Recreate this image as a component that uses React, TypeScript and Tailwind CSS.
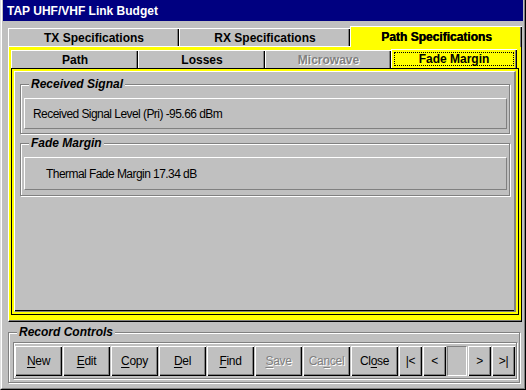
import React from "react";

const FONT = "font-['Liberation_Sans',Arial,sans-serif]";

function TopTab({ label }: { label: string }) {
  return (
    <div className="w-[171px] h-[19px] bg-[#c0c0c0] border-t border-l border-b border-white shadow-[inset_-1px_0_0_#000,inset_-2px_0_0_#808080] flex items-center justify-center font-bold text-[12px] leading-none">
      {label}
    </div>
  );
}

function SubTab({ label, w, disabled }: { label: string; w: string; disabled?: boolean }) {
  return (
    <div
      className={`${w} h-[18px] bg-[#c0c0c0] border-t border-l border-white shadow-[inset_-1px_0_0_#000,inset_-2px_0_0_#808080] flex items-center justify-center font-bold text-[12px] leading-none ${
        disabled ? "text-[#808080] [text-shadow:1px_1px_0_#fff]" : ""
      }`}
    >
      {label}
    </div>
  );
}

function Btn({
  pre,
  u,
  post,
  disabled,
  w = "w-[47px]",
}: {
  pre?: string;
  u?: string;
  post?: string;
  disabled?: boolean;
  w?: string;
}) {
  return (
    <div
      className={`${w} h-[30px] bg-[#c0c0c0] shadow-[inset_1px_1px_0_#fff,inset_-1px_-1px_0_#000,inset_-2px_-2px_0_#808080] flex items-center justify-center text-[12px] leading-none tracking-[-0.3px] ${
        disabled ? "text-[#808080] [text-shadow:1px_1px_0_#fff]" : "text-black"
      }`}
    >
      <span>
        {pre}
        {u && <span className="underline underline-offset-[2px]">{u}</span>}
        {post}
      </span>
    </div>
  );
}

function GroupBox({
  title,
  className,
  children,
}: {
  title: string;
  className?: string;
  children: React.ReactNode;
}) {
  return (
    <div
      className={`relative border border-[#808080] shadow-[inset_1px_1px_0_#fff,1px_1px_0_#fff] ${className ?? ""}`}
    >
      <span className="absolute left-[8px] top-[-8px] px-[2px] bg-[#c0c0c0] font-bold italic text-[12px] leading-[14px]">
        {title}
      </span>
      {children}
    </div>
  );
}

export default function App() {
  return (
    <div
      className={`w-[526px] h-[390px] bg-[#c0c0c0] text-black ${FONT} border-l border-l-[#dfdfdf] border-r border-r-black border-b border-b-black overflow-hidden`}
    >
      <div className="h-full border-l border-l-white border-r border-r-[#808080] border-b border-b-[#808080] px-[1px] pb-[1px] flex flex-col">
        {/* Title bar */}
        <div className="h-[21px] shrink-0 bg-[#000080] text-white font-bold text-[12px] leading-none flex items-center pl-[4px]">
          TAP UHF/VHF Link Budget
        </div>

        {/* Client */}
        <div className="flex flex-col pl-[5px] pr-[1px] pt-[5px]">
          {/* Top tabs */}
          <div className="flex items-end h-[21px]">
            <TopTab label="TX Specifications" />
            <TopTab label="RX Specifications" />
            <div className="flex-1 h-[21px] bg-[#ffff00] border-t border-l border-white shadow-[inset_-1px_0_0_#000,inset_-2px_0_0_#808080] flex items-center justify-center font-bold text-[12px] leading-none [text-shadow:0.4px_0_0_#000]">
              Path Specifications
            </div>
          </div>

          {/* Page 1 */}
          <div className="h-[275px] bg-[#ffff00] border-l border-l-white border-r border-r-black border-b border-b-black shadow-[inset_0_-1px_0_#808080] pl-[2px] pr-[2px] pt-[2px] pb-[6px] flex flex-col">
            {/* Sub tabs */}
            <div className="flex items-end h-[19px] shrink-0">
              <SubTab label="Path" w="w-[127px]" />
              <SubTab label="Losses" w="w-[127px]" />
              <SubTab label="Microwave" w="w-[126px]" disabled />
              <div className="w-[126px] h-[19px] bg-[#ffff00] border-t border-l border-white shadow-[inset_-1px_0_0_#000,inset_-2px_0_0_#808080] p-[2px] pr-[3px]">
                <div className="h-full border border-dotted border-black flex items-center justify-center font-bold text-[12px] leading-none">
                  Fade Margin
                </div>
              </div>
            </div>

            {/* Page 2 */}
            <div className="flex-1 border border-black bg-[#ffff00] p-[2px] flex">
              <div className="flex-1 bg-[#c0c0c0] border-t border-l border-white border-r-2 border-b border-r-[#808080] border-b-[#808080] shadow-[inset_0_-1px_0_#000] pt-[12px] pl-[5px] pr-[4px] flex flex-col">
                <GroupBox title="Received Signal" className="pt-[13px] pl-[3px] pr-[2px] pb-[4px]">
                  <div className="h-[31px] border-t border-l border-white border-r border-b border-r-[#808080] border-b-[#808080] flex items-center pl-[8px] text-[12px] tracking-[-0.55px]">
                    Received Signal Level (Pri) -95.66 dBm
                  </div>
                </GroupBox>
                <GroupBox title="Fade Margin" className="mt-[9px] pt-[13px] pl-[3px] pr-[2px] pb-[5px]">
                  <div className="h-[33px] border-t border-l border-white border-r border-b border-r-[#808080] border-b-[#808080] flex items-center pl-[21px] text-[12px] tracking-[-0.55px]">
                    Thermal Fade Margin 17.34 dB
                  </div>
                </GroupBox>
              </div>
            </div>
          </div>

          {/* Record Controls */}
          <GroupBox title="Record Controls" className="mt-[10px] w-[512px] pt-[9px] pl-[4px] pr-[2px] pb-[3px]">
            <div className="border border-[#808080] shadow-[inset_1px_1px_0_#fff,1px_1px_0_#fff] pt-[3px] pb-[2px] pl-[1px] flex gap-[1px]">
              <Btn u="N" post="ew" />
              <Btn u="E" post="dit" />
              <Btn u="C" post="opy" />
              <Btn u="D" post="el" />
              <Btn u="F" post="ind" />
              <Btn u="S" post="ave" disabled />
              <Btn pre="Ca" u="n" post="cel" disabled />
              <Btn pre="Cl" u="o" post="se" />
              <Btn pre="|<" w="w-[23px]" />
              <Btn pre="<" w="w-[23px]" />
              <div className="w-[20px] h-[30px] border-t border-l border-[#808080] border-r border-b border-r-white border-b-white" />
              <Btn pre=">" w="w-[23px]" />
              <Btn pre=">|" w="w-[23px]" />
            </div>
          </GroupBox>
        </div>
      </div>
    </div>
  );
}
